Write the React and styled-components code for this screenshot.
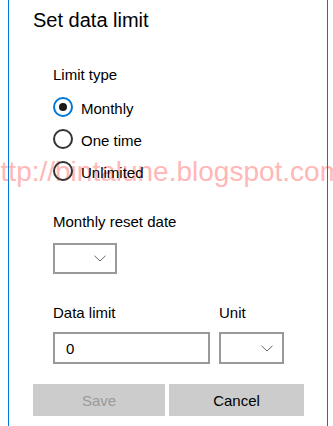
import React, { useState } from "react";
import styled, { createGlobalStyle } from "styled-components";

const GlobalStyle = createGlobalStyle`
  html, body {
    margin: 0;
    padding: 0;
    background: #fff;
  }
  body {
    font-family: "Segoe UI", "Liberation Sans", Arial, sans-serif;
    color: #000;
  }
`;

const Page = styled.div`
  position: relative;
  width: 333px;
  height: 426px;
  overflow: hidden;
  background: #fff;
`;

const Watermark = styled.div`
  position: absolute;
  z-index: 0;
  left: -15px;
  top: 158px;
  font-family: "Liberation Sans", Arial, sans-serif;
  font-size: 28px;
  line-height: 28px;
  color: #ffb8b8;
  white-space: nowrap;
  pointer-events: none;
`;

const Panel = styled.div`
  position: relative;
  z-index: 1;
  box-sizing: border-box;
  margin-left: 8px;
  width: 320px;
  height: 426px;
  padding: 6px 0 0 24px;
  border-left: 1px solid #0078d7;
  border-right: 1px solid #0078d7;
`;

const Title = styled.h1`
  margin: 0;
  font-size: 20px;
  line-height: 28px;
  font-weight: 400;
`;

const Body = styled.div`
  padding-left: 20px;
`;

const Label = styled.div`
  margin-top: ${(p) => p.$top || 0}px;
  font-size: 15px;
  line-height: 20px;
`;

const RadioList = styled.div`
  display: flex;
  flex-direction: column;
  gap: 10px;
  margin-top: 12px;
`;

const RadioRow = styled.label`
  display: flex;
  align-items: flex-start;
  gap: 8px;
  cursor: pointer;
`;

const Circle = styled.span`
  box-sizing: border-box;
  display: flex;
  align-items: center;
  justify-content: center;
  width: 20px;
  height: 20px;
  border-radius: 50%;
  border: 2px solid ${(p) => (p.$checked ? "#0078d7" : "#333")};
  flex-shrink: 0;

  &::after {
    content: "";
    display: ${(p) => (p.$checked ? "block" : "none")};
    width: 8px;
    height: 8px;
    border-radius: 50%;
    background: #1a1a1a;
  }
`;

const RadioText = styled.span`
  margin-top: 2px;
  font-size: 15px;
  line-height: 20px;
`;

const Select = styled.div`
  box-sizing: border-box;
  display: flex;
  align-items: center;
  justify-content: flex-end;
  margin-top: ${(p) => p.$top || 0}px;
  width: ${(p) => p.$width}px;
  height: ${(p) => p.$height || 31}px;
  padding-right: 9px;
  border: 2px solid #999;
  background: #fff;
`;

const FieldRow = styled.div`
  display: grid;
  grid-template-columns: 157px 65px;
  column-gap: 9px;
  margin-top: 29px;
`;

const Field = styled.div`
  display: flex;
  flex-direction: column;
`;

const TextInput = styled.input`
  box-sizing: border-box;
  margin-top: 9px;
  width: 100%;
  height: 32px;
  padding: 0 0 0 11px;
  border: 2px solid #999;
  border-radius: 0;
  background: #fff;
  font-family: inherit;
  font-size: 15px;
  color: #000;
  outline: none;
`;

const Buttons = styled.div`
  display: grid;
  grid-template-columns: 132px 135px;
  column-gap: 4px;
  margin-top: 20px;
`;

const Button = styled.button`
  height: 32px;
  border: none;
  background: #ccc;
  font-family: inherit;
  font-size: 15px;
  font-weight: 400;
  color: ${(p) => (p.disabled ? "#9a9a9a" : "#000")};
  padding: 0;
`;

function Chevron() {
  return (
    <svg width="12" height="7" viewBox="0 0 12 7" fill="none">
      <path d="M0.5 0.8 L6 6 L11.5 0.8" stroke="#666" strokeWidth="1" />
    </svg>
  );
}

const types = ["Monthly", "One time", "Unlimited"];

export default function App() {
  const [type, setType] = useState("Monthly");

  return (
    <Page>
      <GlobalStyle />
      <Watermark>http://bintalune.blogspot.com</Watermark>
      <Panel>
        <Title>Set data limit</Title>
        <Body>
          <Label $top={31}>Limit type</Label>
          <RadioList>
            {types.map((t) => (
              <RadioRow key={t} onClick={() => setType(t)}>
                <Circle $checked={type === t} />
                <RadioText>{t}</RadioText>
              </RadioRow>
            ))}
          </RadioList>

          <Label $top={29}>Monthly reset date</Label>
          <Select $top={11} $width={64}>
            <Chevron />
          </Select>

          <FieldRow>
            <Field>
              <Label>Data limit</Label>
              <TextInput defaultValue="0" />
            </Field>
            <Field>
              <Label>Unit</Label>
              <Select $top={9} $width={65} $height={32}>
                <Chevron />
              </Select>
            </Field>
          </FieldRow>
        </Body>
        <Buttons>
          <Button disabled>Save</Button>
          <Button>Cancel</Button>
        </Buttons>
      </Panel>
    </Page>
  );
}
